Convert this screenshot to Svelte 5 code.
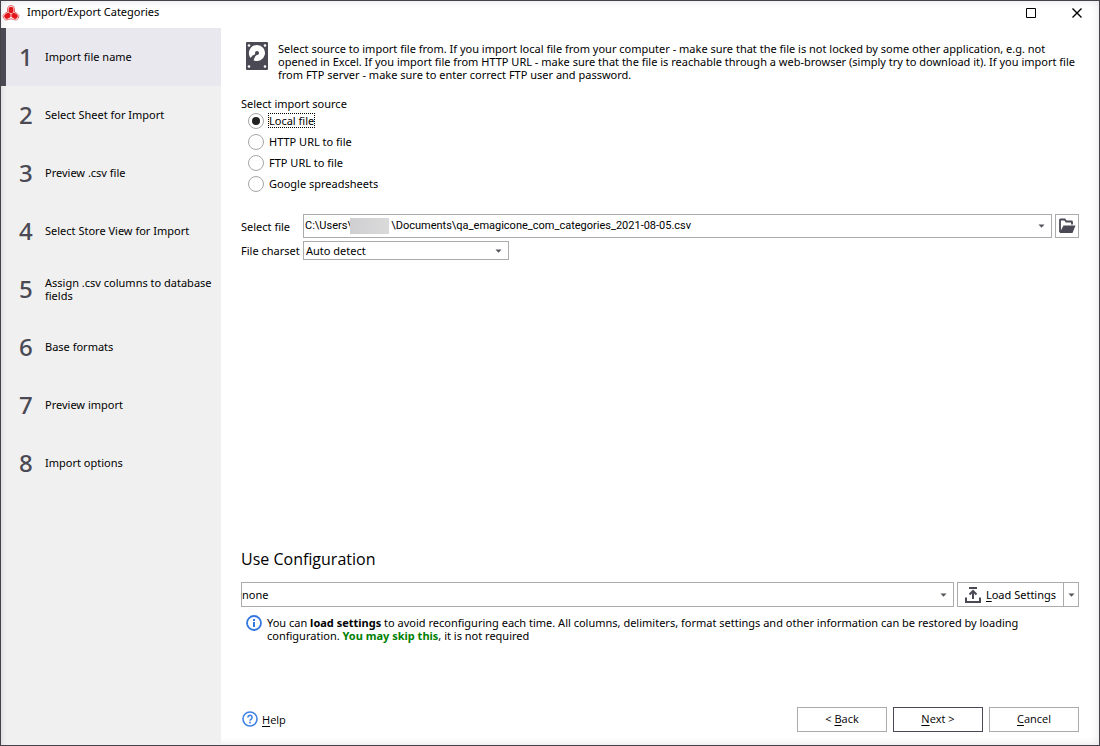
<script>
  const steps = [
    'Import file name',
    'Select Sheet for Import',
    'Preview .csv file',
    'Select Store View for Import',
    'Assign .csv columns to database fields',
    'Base formats',
    'Preview import',
    'Import options'
  ];

  const sources = [
    { id: 'local', label: 'Local file' },
    { id: 'http', label: 'HTTP URL to file' },
    { id: 'ftp', label: 'FTP URL to file' },
    { id: 'google', label: 'Google spreadsheets' }
  ];

  // the user name part of the path stays blank, the mask is laid over it
  const userGap = '\u2003\u2003\u2003\u2002';

  let currentStep = $state(0);
  let source = $state('local');
  let filePath = $state(`C:\\Users\\${userGap}\\Documents\\qa_emagicone_com_categories_2021-08-05.csv`);
  let charset = $state('auto');
  let config = $state('none');
</script>

{#snippet arrow()}
  <svg class="arrow" viewBox="0 0 7 4" width="7" height="4" aria-hidden="true">
    <path d="M.5.5h6L3.500 3.800z" fill="#55555c" />
  </svg>
{/snippet}

<div class="window">
  <header class="titlebar">
    <svg class="logo" viewBox="0 0 18 18" width="18" height="18" aria-hidden="true">
      <path d="M9 1.500a3.500 3.500 0 0 1 3.500 3.500v3l2.600 1.500a3.400 3.400 0 0 1-3.400 6L9 14.800l-2.700.7a3.400 3.400 0 0 1-3.400-6L5.500 8V5A3.500 3.500 0 0 1 9 1.500z" fill="#fff" stroke="#e0696b" />
      <path d="M9 2.800a2.500 2.500 0 0 1 2.500 2.500v2.900L9 9.500 6.500 8.200V5.300A2.500 2.500 0 0 1 9 2.800zM6 8.600l2.600 1.500v3l-2.400 1.400A2.500 2.500 0 0 1 3.600 10zM12 8.600l-2.600 1.500v3l2.400 1.400a2.500 2.500 0 0 0 2.600-4.500z" fill="#e3151b" />
    </svg>
    <h1>Import/Export Categories</h1>
    <button class="win-btn" aria-label="Maximize">
      <svg viewBox="0 0 10 10" width="10" height="10"><path d="M.5.5h9v9h-9z" fill="none" stroke="#000" /></svg>
    </button>
    <button class="win-btn" aria-label="Close">
      <svg viewBox="0 0 10 10" width="10" height="10"><path d="M.5.5l9 9M9.500.5l-9 9" stroke="#000" stroke-width="1.400" /></svg>
    </button>
  </header>

  <div class="body">
    <nav class="steps">
      {#each steps as step, i}
        <button class="step" class:active={currentStep === i} onclick={() => (currentStep = i)}>
          <span class="step-number">{i + 1}</span>
          <span class="step-label">{step}</span>
        </button>
      {/each}
    </nav>

    <main>
      <div class="intro">
        <svg viewBox="0 0 22 28" width="22" height="28" aria-hidden="true">
          <rect width="22" height="28" rx="1" fill="#4a4954" />
          <g fill="#fff">
            <circle cx="3" cy="3.500" r="1.300" />
            <circle cx="19" cy="3.500" r="1.300" />
            <circle cx="3" cy="24.500" r="1.300" />
            <circle cx="19" cy="24.500" r="1.300" />
            <path d="M11 3a8 8 0 1 1-3.500 15.200l1.700-3.900-2.200-1.200-2.300 2.900A8 8 0 0 1 11 3z" />
          </g>
          <path d="M11.500 11L5.500 16.500" stroke="#4a4954" stroke-width="1.800" />
          <circle cx="11" cy="11" r="2" fill="#4a4954" />
        </svg>
        <p>
          Select source to import file from. If you import local file from your computer - make sure that the file is
          not locked by some other application, e.g. not opened in Excel. If you import file from HTTP URL - make sure
          that the file is reachable through a web-browser (simply try to download it). If you import file from FTP
          server - make sure to enter correct FTP user and password.
        </p>
      </div>

      <fieldset class="sources">
        <legend>Select import source</legend>
        {#each sources as item}
          <label class="source">
            <input type="radio" name="source" value={item.id} bind:group={source} />
            <span class:focused={source === item.id}>{item.label}</span>
          </label>
        {/each}
      </fieldset>

      <div class="file-grid">
        <label for="file">Select file</label>
        <div class="file-row">
          <div class="combo path">
            <input id="file" type="text" bind:value={filePath} spellcheck="false" />
            <span class="mask"></span>
            {@render arrow()}
          </div>
          <button class="browse" aria-label="Browse">
            <svg viewBox="0 0 18 16" width="18" height="16">
              <path d="M2 14V2q0-.5.500-.5h4.200l1.600 2h5.200q.5 0 .5.500v2.500" fill="none" stroke="#4a4954" stroke-width="1.800" />
              <path d="M5.500 7.500H17.500L14.500 15H1.500z" fill="#4a4954" />
            </svg>
          </button>
        </div>
        <label for="charset">File charset</label>
        <div class="combo charset">
          <select id="charset" bind:value={charset}>
            <option value="auto">Auto detect</option>
          </select>
          {@render arrow()}
        </div>
      </div>

      <section class="config">
        <h2 id="config-title">Use Configuration</h2>
        <div class="config-row">
          <div class="combo">
            <select aria-labelledby="config-title" bind:value={config}>
              <option value="none">none</option>
            </select>
            {@render arrow()}
          </div>
          <div class="split">
            <button class="load">
              <svg viewBox="0 0 16 16" width="16" height="16" aria-hidden="true">
                <path d="M4 1h8M8 12V4M4.500 7.500L8 4l3.500 3.500M1 10.500V15h14v-4.500" fill="none" stroke="#4a4954" stroke-width="2" />
              </svg>
              <span><u>L</u>oad Settings</span>
            </button>
            <button class="more" aria-label="More load options">{@render arrow()}</button>
          </div>
        </div>
        <div class="hint">
          <svg viewBox="0 0 16 16" width="16" height="16" aria-hidden="true">
            <circle cx="8" cy="8" r="7" fill="none" stroke="#3578e0" stroke-width="1.800" />
            <path d="M7 4h2v2H7zM7 7h2v5H7z" fill="#3578e0" />
          </svg>
          <p>
            You can <b>load settings</b> to avoid reconfiguring each time. All columns, delimiters, format settings and
            other information can be restored by loading configuration. <b class="skip">You may skip this</b>, it is not
            required
          </p>
        </div>
      </section>

      <footer>
        <a class="help" href="#help">
          <svg viewBox="0 0 16 16" width="16" height="16" aria-hidden="true">
            <circle cx="8" cy="8" r="7" fill="none" stroke="#3f83e6" stroke-width="1.600" />
            <path d="M5.900 6.500a2.100 2.100 0 1 1 3.200 1.700Q8 8.700 8 9.800" fill="none" stroke="#3f83e6" stroke-width="1.600" />
            <path d="M7.200 10.800h1.600v1.600H7.200z" fill="#3f83e6" />
          </svg>
          <span><u>H</u>elp</span>
        </a>
        <button class="nav-btn">&lt; <u>B</u>ack</button>
        <button class="nav-btn primary"><u>N</u>ext &gt;</button>
        <button class="nav-btn"><u>C</u>ancel</button>
      </footer>
    </main>
  </div>
</div>

<style>
  :global(body) {
    margin: 0;
  }

  .window {
    box-sizing: border-box;
    display: flex;
    flex-direction: column;
    min-height: 100vh;
    border: 1px solid #454349;
    background: #fff;
    box-shadow: inset 0 0 8px rgba(0, 0, 0, 0.12);
    color: #000;
    font-family: 'Noto Sans', 'Open Sans', sans-serif;
    font-size: 11px;
    line-height: 13px;
  }

  .window * {
    box-sizing: border-box;
  }

  button,
  input,
  select {
    margin: 0;
    padding: 0;
    border: none;
    border-radius: 0;
    background: none;
    color: inherit;
    font: inherit;
  }

  h1,
  h2,
  p {
    margin: 0;
    font-weight: 400;
  }

  svg {
    display: block;
    flex-shrink: 0;
  }

  u {
    text-underline-offset: 2px;
  }

  .titlebar {
    display: flex;
    align-items: center;
    height: 27px;
    padding: 0 0 3px 1px;
  }

  .titlebar h1 {
    flex: 1;
    padding: 0 0 3px 7px;
    font-size: 11px;
  }

  .win-btn {
    display: flex;
    align-items: center;
    justify-content: center;
    width: 47px;
    height: 24px;
  }

  .win-btn:last-child {
    width: 45px;
  }

  .body {
    display: flex;
    flex: 1;
  }

  .steps {
    flex: 0 0 220px;
    background: #f0f0f0;
    box-shadow: inset 5px 0 5px -4px rgba(0, 0, 0, 0.1);
  }

  .step {
    display: flex;
    align-items: center;
    width: 100%;
    height: 58px;
    padding: 0 8px 0 13px;
    border-left: 5px solid transparent;
    text-align: left;
  }

  .step.active {
    border-left-color: #4a4954;
    background: #e9e8ef;
  }

  .step-number {
    width: 26px;
    color: #4a4954;
    font-size: 24px;
    font-weight: 500;
    line-height: 28px;
  }

  .step-label {
    flex: 1;
    padding-bottom: 1px;
  }

  main {
    display: flex;
    flex: 1;
    flex-direction: column;
    min-width: 0;
    padding: 14px 20px 13px;
  }

  .intro {
    display: flex;
    gap: 10px;
    padding-left: 5px;
  }

  .sources {
    margin: 16px 0 0;
    padding: 0;
    border: none;
  }

  legend {
    padding: 0;
  }

  .source {
    display: flex;
    align-items: center;
    gap: 4px;
    width: max-content;
    height: 21px;
    padding-left: 7px;
  }

  .source input {
    display: grid;
    place-items: center;
    width: 16px;
    height: 16px;
    border: 1px solid #a6a6a6;
    border-radius: 50%;
    appearance: none;
  }

  .source input:checked::before {
    width: 8px;
    height: 8px;
    border-radius: 50%;
    background: #222;
    content: '';
  }

  .source span {
    border: 1px dotted transparent;
  }

  .source .focused {
    border-color: #000;
  }

  .file-grid {
    display: grid;
    grid-template-columns: 59px 1fr;
    align-items: center;
    gap: 3px;
    margin-top: 20px;
    white-space: nowrap;
  }

  .file-row,
  .config-row {
    display: flex;
    gap: 3px;
  }

  .combo {
    position: relative;
    display: flex;
    flex: 1;
    align-items: center;
    height: 24px;
    border: 1px solid #ababab;
    background: #fff;
  }

  .combo input,
  .combo select {
    flex: 1;
    width: 100%;
    height: 100%;
    padding: 0 18px 1px 0;
    outline: none;
    appearance: none;
  }

  .combo .arrow {
    position: absolute;
    right: 6px;
    pointer-events: none;
  }

  .combo.path {
    font-family: Roboto, 'Noto Sans', sans-serif;
  }

  .combo.path input {
    padding-left: 1px;
  }

  .combo.charset {
    width: 206px;
    height: 19px;
  }

  .charset select {
    padding-left: 2px;
  }

  .mask {
    position: absolute;
    left: 46px;
    width: 39px;
    height: 16px;
    background: linear-gradient(90deg, #cfcfd1, #dadadb);
  }

  .browse {
    display: grid;
    place-items: center;
    width: 24px;
    height: 24px;
    border: 1px solid #ababab;
  }

  .config {
    margin-top: auto;
  }

  .config h2 {
    font-family: 'Open Sans', 'Noto Sans', sans-serif;
    font-size: 16px;
    line-height: 24px;
  }

  .config-row {
    margin-top: 11px;
  }

  .config-row .combo,
  .split {
    height: 25px;
  }

  .split {
    display: flex;
    border: 1px solid #ababab;
  }

  .load {
    display: flex;
    align-items: center;
    justify-content: center;
    gap: 5px;
    width: 105px;
  }

  .load span {
    padding-bottom: 1px;
  }

  .more {
    display: grid;
    place-items: center;
    width: 15px;
    border-left: 1px solid #ababab;
  }

  .hint {
    display: flex;
    gap: 5px;
    margin-top: 8px;
    padding-left: 5px;
  }

  .hint p {
    max-width: 770px;
    padding-top: 1px;
  }

  .skip {
    color: #008000;
  }

  footer {
    display: flex;
    align-items: center;
    gap: 6px;
    margin-top: 65px;
    font-family: 'Open Sans', 'Noto Sans', sans-serif;
  }

  .help {
    display: flex;
    align-items: center;
    gap: 4px;
    margin-right: auto;
    padding: 0 0 1px 1px;
    color: inherit;
    text-decoration: none;
  }

  .nav-btn {
    width: 90px;
    height: 25px;
    padding-bottom: 2px;
    border: 1px solid #ababab;
  }

  .nav-btn.primary {
    border-color: #4a4958;
  }
</style>
